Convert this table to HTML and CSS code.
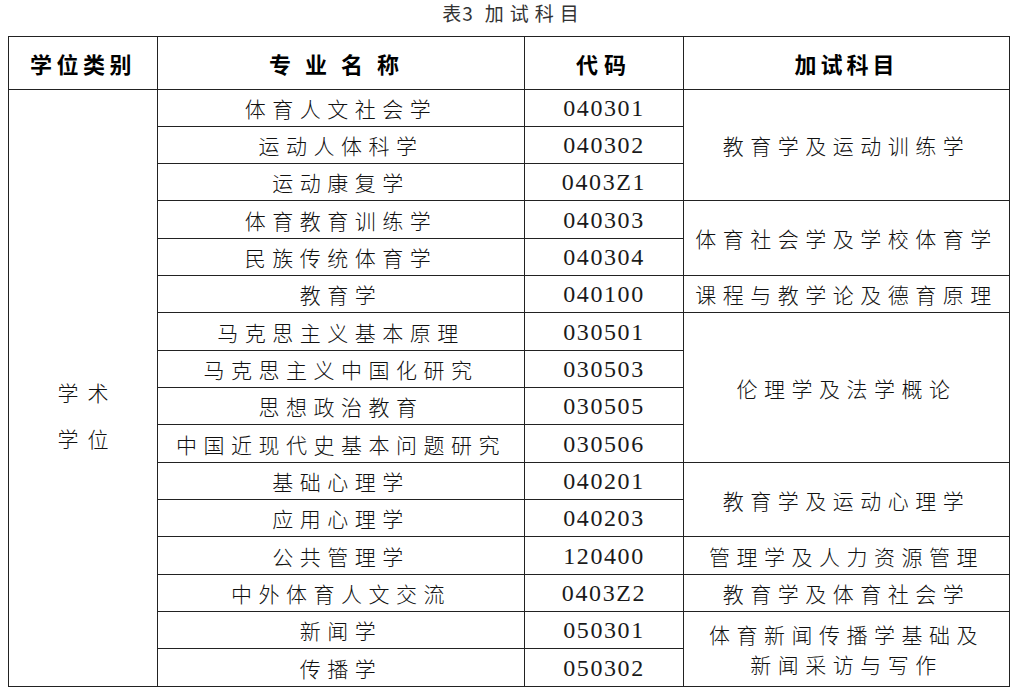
FILE: index.html
```html
<!DOCTYPE html>
<html lang="zh">
<head>
<meta charset="utf-8">
<title>表3 加试科目</title>
<link rel="stylesheet" href="styles.css">
</head>
<body>
<div class="page">
  <div class="caption"><span class="caption-lead">表3</span><span class="caption-wide">加试科目</span></div>
  <table class="subjects">
    <colgroup>
      <col class="c1"><col class="c2"><col class="c3"><col class="c4">
    </colgroup>
    <thead>
      <tr class="head">
        <th class="h1">学位类别</th>
        <th class="h2">专业名称</th>
        <th class="h3">代码</th>
        <th class="h4">加试科目</th>
      </tr>
    </thead>
    <tbody>
      <tr>
        <td class="degree" rowspan="16"><div class="degree-text">学术<br>学位</div></td>
        <td class="name">体育人文社会学</td><td class="code">040301</td>
        <td class="exam" rowspan="3">教育学及运动训练学</td>
      </tr>
      <tr><td class="name">运动人体科学</td><td class="code">040302</td></tr>
      <tr><td class="name">运动康复学</td><td class="code">0403Z1</td></tr>
      <tr>
        <td class="name">体育教育训练学</td><td class="code">040303</td>
        <td class="exam" rowspan="2">体育社会学及学校体育学</td>
      </tr>
      <tr><td class="name">民族传统体育学</td><td class="code">040304</td></tr>
      <tr>
        <td class="name">教育学</td><td class="code">040100</td>
        <td class="exam">课程与教学论及德育原理</td>
      </tr>
      <tr>
        <td class="name">马克思主义基本原理</td><td class="code">030501</td>
        <td class="exam" rowspan="4">伦理学及法学概论</td>
      </tr>
      <tr><td class="name">马克思主义中国化研究</td><td class="code">030503</td></tr>
      <tr><td class="name">思想政治教育</td><td class="code">030505</td></tr>
      <tr><td class="name">中国近现代史基本问题研究</td><td class="code">030506</td></tr>
      <tr>
        <td class="name">基础心理学</td><td class="code">040201</td>
        <td class="exam" rowspan="2">教育学及运动心理学</td>
      </tr>
      <tr><td class="name">应用心理学</td><td class="code">040203</td></tr>
      <tr>
        <td class="name">公共管理学</td><td class="code">120400</td>
        <td class="exam">管理学及人力资源管理</td>
      </tr>
      <tr>
        <td class="name">中外体育人文交流</td><td class="code">0403Z2</td>
        <td class="exam">教育学及体育社会学</td>
      </tr>
      <tr>
        <td class="name">新闻学</td><td class="code">050301</td>
        <td class="exam two-line" rowspan="2">体育新闻传播学基础及<br>新闻采访与写作</td>
      </tr>
      <tr><td class="name">传播学</td><td class="code">050302</td></tr>
    </tbody>
  </table>
</div>
</body>
</html>
```

FILE: styles.css
```css
html, body {
  margin: 0;
  padding: 0;
  background: #ffffff;
}

.page {
  padding: 0 8px;
  font-family: "Noto Sans CJK SC", "Liberation Serif", serif;
  color: #111;
}

.caption {
  height: 26px;
  line-height: 26px;
  margin-bottom: 9.5px;
  display: flex;
  justify-content: center;
  font-size: 19px;
  color: #333;
  padding-right: 14px;
}

.caption-lead {
  font-family: "Noto Sans CJK SC", "Liberation Serif", serif;
  letter-spacing: 1px;
  margin-right: 11px;
}

.caption-wide {
  font-family: "Noto Sans CJK SC", serif;
  letter-spacing: 6px;
  margin-right: -6px;
}

.subjects {
  border-collapse: collapse;
  table-layout: fixed;
  width: 1001px;
}

.c1 { width: 149px; }
.c2 { width: 367px; }
.c3 { width: 159px; }
.c4 { width: 326px; }

.subjects th,
.subjects td {
  border: 1px solid #222;
  padding: 0;
  text-align: center;
  vertical-align: middle;
  white-space: nowrap;
}

.head {
  height: 53px;
}

.subjects th {
  font-size: 22px;
  font-weight: 700;
  color: #000;
}

.h1 { letter-spacing: 4.5px; padding-left: 4.5px; }
.h2 { letter-spacing: 14px; padding-left: 14px; }
.h3 { letter-spacing: 6px; padding-left: 6px; }
.h4 { letter-spacing: 4px; padding-left: 4px; }

.subjects tbody tr {
  height: 37.34px;
}

.name,
.exam {
  font-size: 21px;
  font-weight: 300;
  letter-spacing: 6.5px;
  padding-left: 6.5px;
  line-height: 24px;
  padding-bottom: 2px;
}

.code {
  font-family: "Liberation Serif", "DejaVu Serif", serif;
  font-size: 24px;
  font-weight: 400;
  color: #1a1a1a;
  letter-spacing: 1.6px;
  padding-left: 1.6px;
  line-height: 24px;
  padding-bottom: 2px;
}

.two-line {
  line-height: 30px;
}

.degree {
  font-size: 21px;
  font-weight: 300;
}

.degree-text {
  letter-spacing: 9px;
  padding-left: 9px;
  padding-top: 54px;
  line-height: 46px;
}
```
